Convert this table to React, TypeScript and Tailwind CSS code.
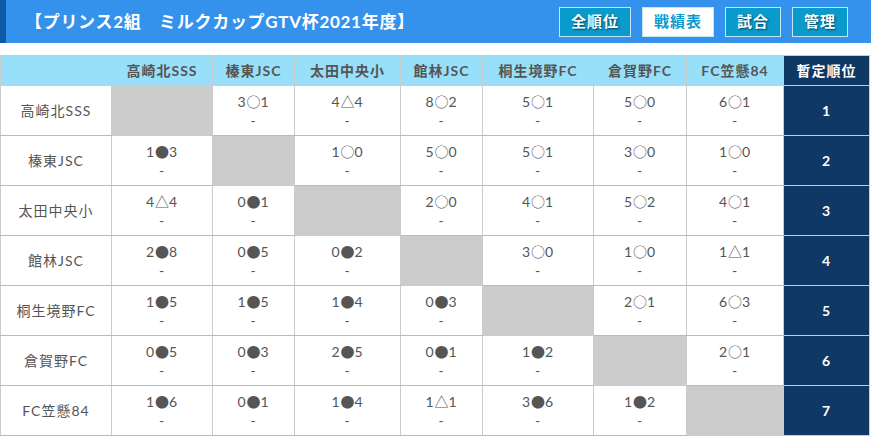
import React from "react";

const teams = ["高崎北SSS", "榛東JSC", "太田中央小", "館林JSC", "桐生境野FC", "倉賀野FC", "FC笠懸84"];
const widths = [110, 100, 81, 105, 81, 110, 92, 96, 85];

const results: string[][] = [
  ["", "3○1", "4△4", "8○2", "5○1", "5○0", "6○1"],
  ["1●3", "", "1○0", "5○0", "5○1", "3○0", "1○0"],
  ["4△4", "0●1", "", "2○0", "4○1", "5○2", "4○1"],
  ["2●8", "0●5", "0●2", "", "3○0", "1○0", "1△1"],
  ["1●5", "1●5", "1●4", "0●3", "", "2○1", "6○3"],
  ["0●5", "0●3", "2●5", "0●1", "1●2", "", "2○1"],
  ["1●6", "0●1", "1●4", "1△1", "3●6", "1●2", ""],
];

const font = { fontFamily: 'Lato, "Noto Sans CJK JP", sans-serif' };
const cjk = { fontFamily: '"Noto Sans CJK JP", sans-serif' };

function Score({ s }: { s: string }) {
  return (
    <span>
      {s[0]}
      <span style={cjk} className="tracking-[0px]">{s[1]}</span>
      {s[2]}
    </span>
  );
}

export default function App() {
  return (
    <div className="w-[871px] bg-white" style={font}>
      <div className="flex h-[43px] items-center bg-[#3592ec]">
        <div className="h-full w-[6px] bg-[#0d5aa7]" />
        <div className="ml-[19px] text-[17px] font-bold text-white tracking-[0.7px]">【プリンス2組　ミルクカップGTV杯2021年度】</div>
        <div className="ml-auto mr-[23px] flex gap-[11px]">
          {["全順位", "戦績表", "試合", "管理"].map((b, i) => (
            <div
              key={b}
              className={
                "flex h-[30px] items-center justify-center border border-[#c5e6f5] text-[15px] font-bold tracking-[1px] " +
                (i === 1 ? "bg-white text-[#0a9bcd]" : "bg-[#0a9bcd] text-white [text-shadow:1px_1px_2px_rgba(0,0,0,0.6)]") +
                (i < 2 ? " w-[72px]" : " w-[56px]")
              }
            >
              {b}
            </div>
          ))}
        </div>
      </div>
      <div className="h-[12px]" />
      <table className="table-fixed border-collapse border border-[#ccc] text-[14px] tracking-[1px] text-[#555]">
        <colgroup>
          {widths.map((w, i) => (
            <col key={i} style={{ width: w + 1 }} />
          ))}
        </colgroup>
        <thead>
          <tr className="h-[30px] bg-[#98e0fa]">
            <th className="border border-[#ccc]" />
            {teams.map((t) => (
              <th key={t} className="border border-[#ccc] text-center font-bold">
                {t}
              </th>
            ))}
            <th className="border border-[#ccc] bg-[#0f3864] font-bold text-white">暫定順位</th>
          </tr>
        </thead>
        <tbody>
          {teams.map((t, r) => (
            <tr key={t} className="h-[50px]">
              <td className="border-x border-b border-x-[#ccc] border-b-[#bbb] border-b-dotted text-center align-middle">{t}</td>
              {results[r].map((s, c) =>
                r === c ? (
                  <td key={c} className="border-x border-b border-[#ccc] bg-[#ccc]" />
                ) : (
                  <td key={c} className="border-x border-b border-x-[#ccc] border-b-[#bbb] border-b-dotted text-center align-middle leading-[20px]">
                    <div className="h-[20px]"><Score s={s} /></div>
                    <div className="h-[20px]">-</div>
                  </td>
                )
              )}
              <td className="border border-[#ccc] bg-[#0f3864] text-center align-middle font-bold text-white">{r + 1}</td>
            </tr>
          ))}
        </tbody>
      </table>
    </div>
  );
}
